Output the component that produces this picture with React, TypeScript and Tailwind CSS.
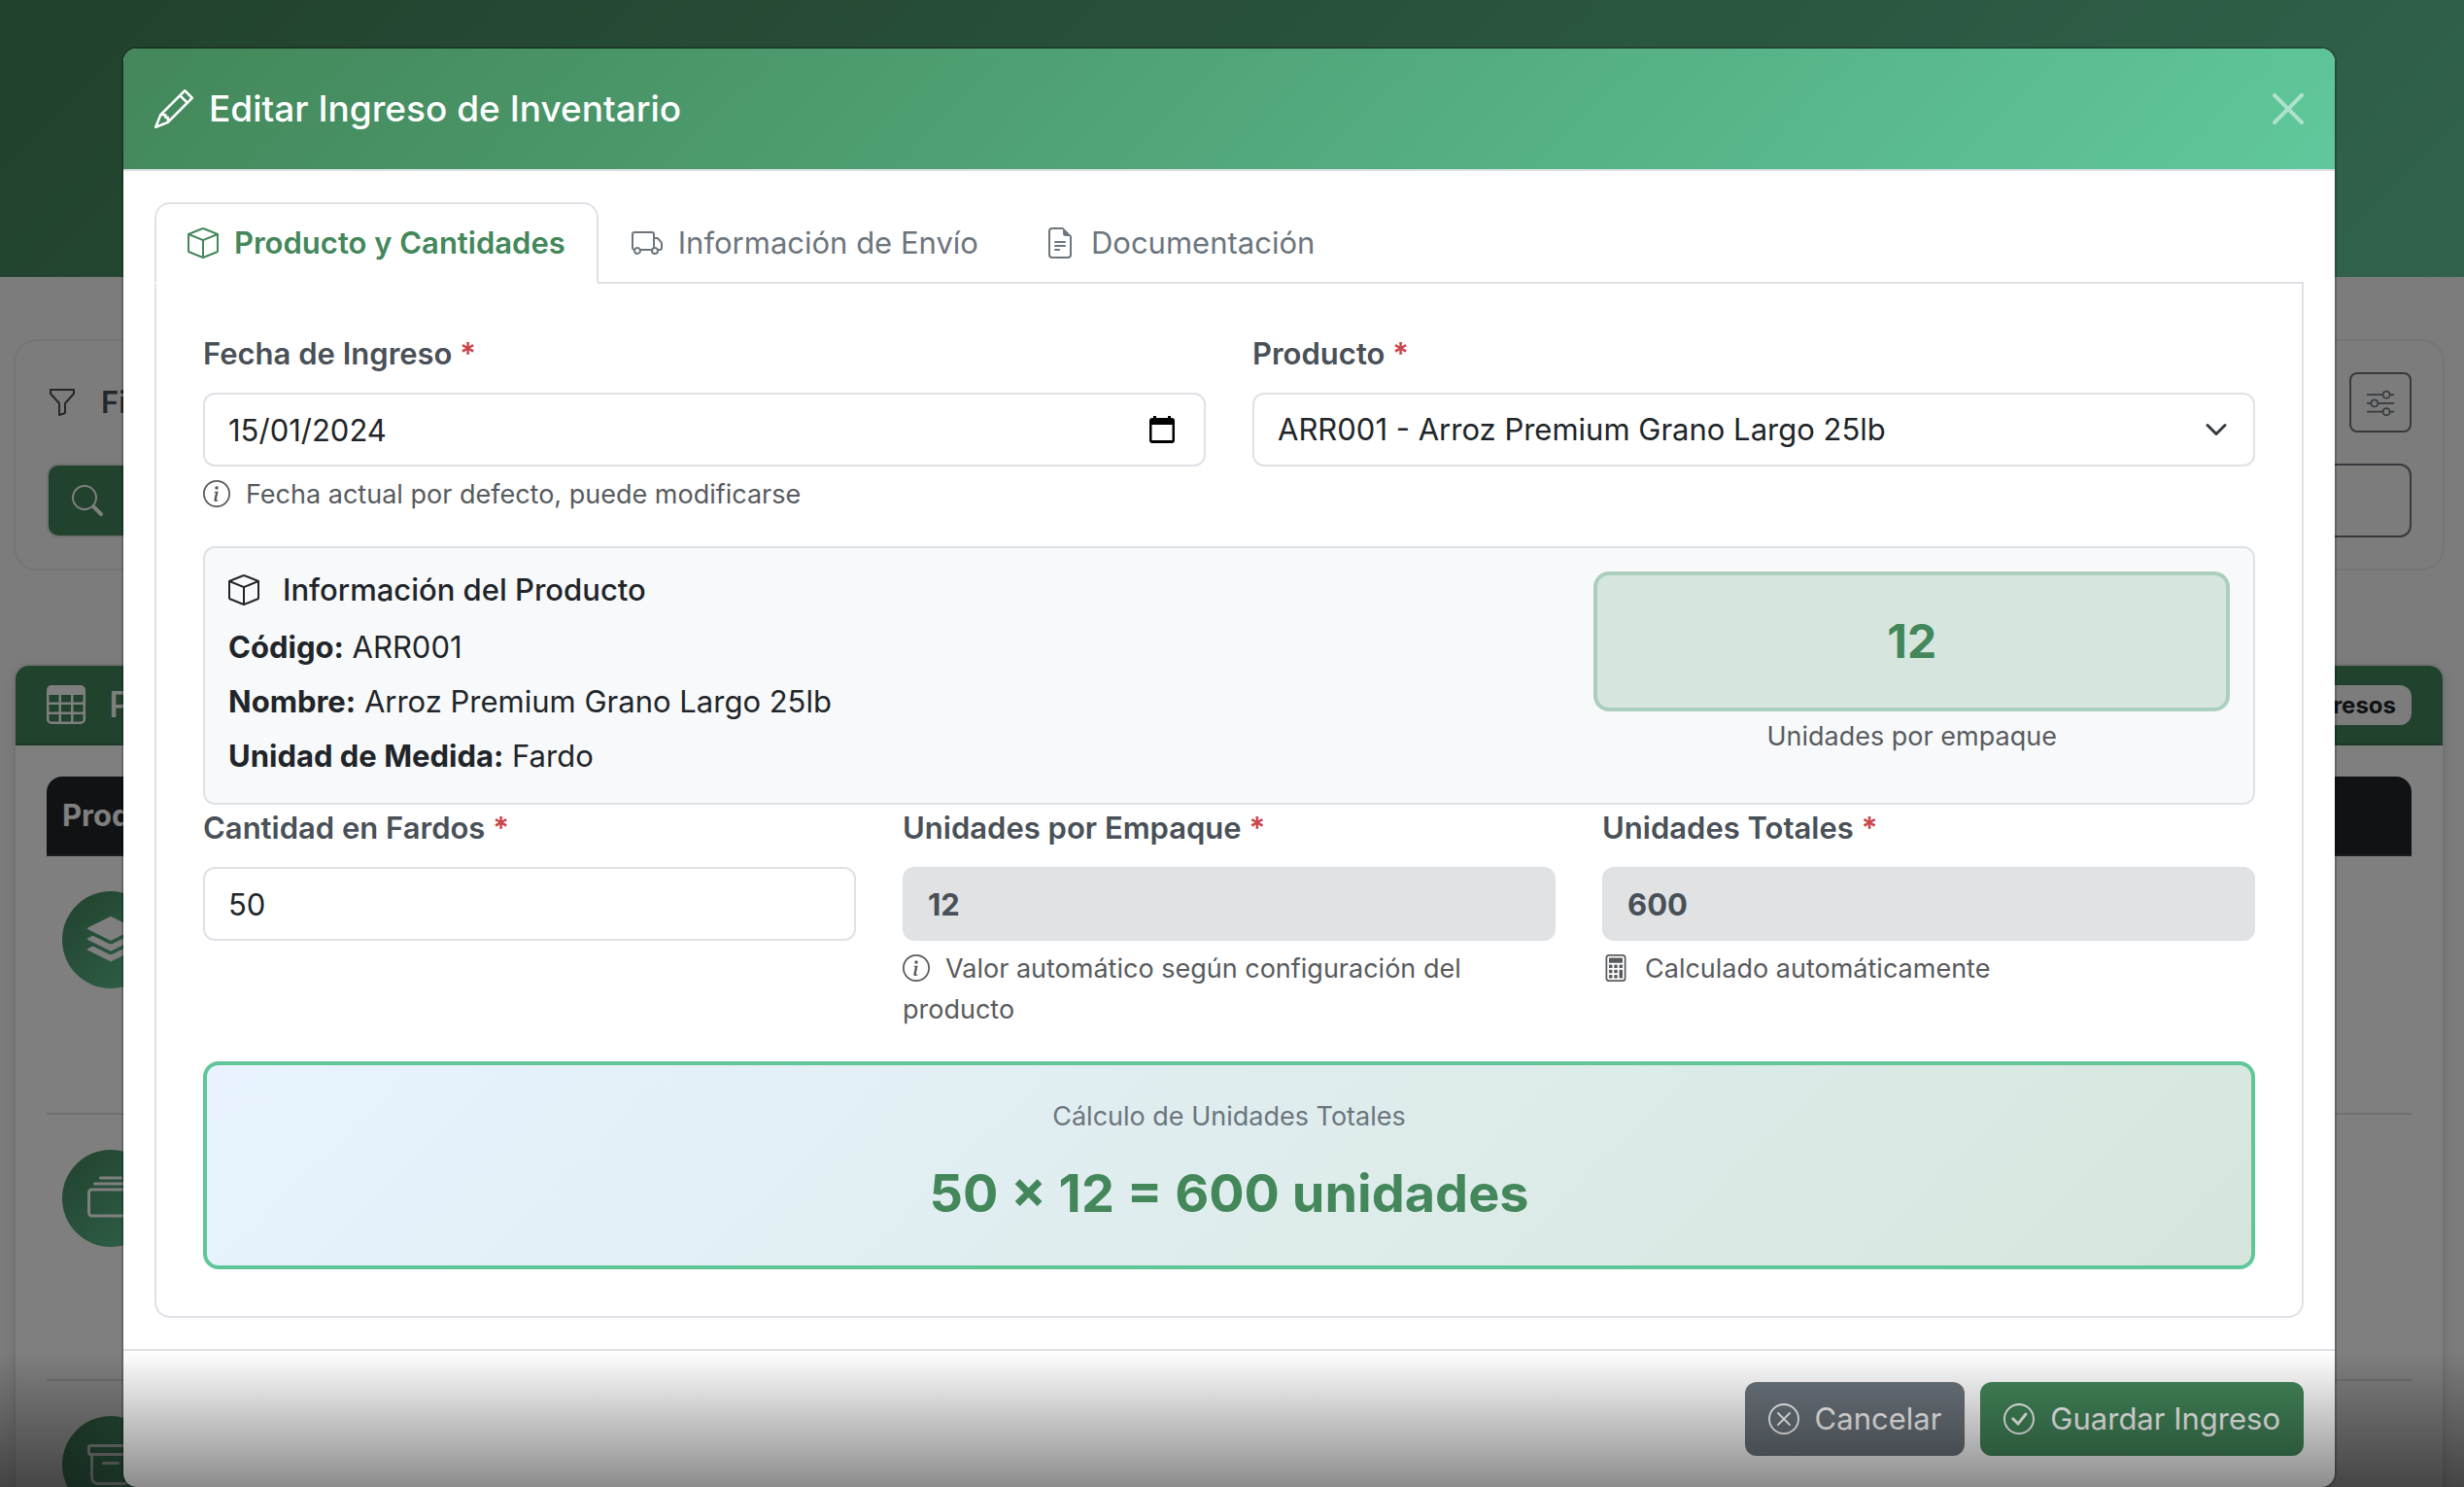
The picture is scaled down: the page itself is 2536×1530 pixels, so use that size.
import { useState } from "react";
import type { ReactNode } from "react";
import {
  BsArchive,
  BsBox,
  BsCalculator,
  BsCheckCircle,
  BsCollection,
  BsFileEarmarkText,
  BsFunnel,
  BsInfoCircle,
  BsPencil,
  BsSearch,
  BsSliders,
  BsStack,
  BsTable,
  BsTruck,
  BsXCircle,
} from "react-icons/bs";

const rows = [
  { id: "arroz", icon: <BsStack />, height: "h-[266px]" },
  { id: "frijol", icon: <BsCollection />, height: "h-[274px]" },
  { id: "azucar", icon: <BsArchive />, height: "h-[274px]" },
];

function InventoryPage() {
  return (
    <div className="h-full overflow-hidden bg-[#f8f8f8]">
      <header className="h-[285px] bg-linear-135 from-[#42845a] to-[#62c698]" />
      <main className="flex flex-col gap-24 pt-16 pr-5 pl-3.5">
        <section className="rounded-3xl border-2 border-[#ebebeb] p-8">
          <div className="flex items-center justify-between">
            <h2 className="flex items-center gap-6 text-[31px] font-semibold text-[#495057]">
              <BsFunnel className="size-8" />
              Filtros
            </h2>
            <button
              type="button"
              aria-label="Opciones de filtro"
              className="flex h-[62px] w-16 items-center justify-center rounded-lg border-2 border-[#6c757d] text-[#6c757d]"
            >
              <BsSliders className="size-7" />
            </button>
          </div>
          <div className="mt-8 flex h-[76px]">
            <button
              type="button"
              aria-label="Buscar"
              className="flex w-21 items-center justify-center rounded-l-xl border-2 border-[#dee2e6] bg-[#428458] text-white"
            >
              <BsSearch className="size-8" />
            </button>
            <input
              type="search"
              aria-label="Buscar ingreso"
              className="min-w-0 grow rounded-r-xl border-2 border-[#6c757d] bg-transparent px-6"
            />
          </div>
        </section>

        <section className="rounded-2xl border-2 border-[#e4e4e4] bg-white shadow-[0_4px_12px_rgba(0,0,0,0.1)]">
          <div className="flex h-[82px] items-center justify-between rounded-t-[14px] border-b-2 border-[#387350] bg-[#428458] px-8 text-white">
            <h2 className="flex items-center gap-6 text-[37px] font-medium">
              <BsTable className="size-10" />
              PEPS
            </h2>
            <span className="rounded-xl bg-[#f8f9fa] px-4 py-2 text-[24px] leading-[25px] font-bold text-[#212529]">
              3 Ingresos
            </span>
          </div>
          <div className="p-8">
            <table className="w-full border-separate border-spacing-0 text-left">
              <thead>
                <tr>
                  <th className="h-[82px] rounded-t-2xl border-b-2 border-[#373b3e] bg-[#212529] px-4 text-[31px] font-bold text-white">
                    Producto
                  </th>
                </tr>
              </thead>
              <tbody>
                {rows.map((row) => (
                  <tr key={row.id}>
                    <td className={`border-b-2 border-[#dee2e6] px-4 py-9 align-top ${row.height}`}>
                      <div className="flex size-[100px] items-center justify-center rounded-full bg-linear-135 from-[#42845a] to-[#62c698] text-5xl text-white">
                        {row.icon}
                      </div>
                    </td>
                  </tr>
                ))}
              </tbody>
            </table>
          </div>
        </section>
      </main>
    </div>
  );
}

function FieldLabel({ htmlFor, children }: { htmlFor: string; children: ReactNode }) {
  return (
    <label htmlFor={htmlFor} className="mb-4 block text-[31px] leading-[48px] font-semibold text-[#495057]">
      {children} <span className="text-[#cb444a]">*</span>
    </label>
  );
}

function Hint({ icon, children }: { icon: ReactNode; children: ReactNode }) {
  return (
    <p className="mt-2 text-[27px] leading-[42px] text-[#585b5e]">
      <span className="mr-4 inline-block align-[-4px] text-[28px]">{icon}</span>
      {children}
    </p>
  );
}

const control =
  "block h-[76px] w-full appearance-none rounded-xl border-2 border-[#dee2e6] px-6 text-[31px]";

function Tab({
  icon,
  active = false,
  children,
}: {
  icon: ReactNode;
  active?: boolean;
  children: ReactNode;
}) {
  return (
    <button
      type="button"
      role="tab"
      aria-selected={active}
      className={`-mb-0.5 flex h-[84px] items-center gap-4 rounded-t-2xl border-2 px-8 text-[31px] ${
        active
          ? "border-[#dee2e6] border-b-white bg-white font-semibold text-[#43875a]"
          : "border-transparent text-[#6c757d]"
      }`}
    >
      <span className="text-[32px]">{icon}</span>
      {children}
    </button>
  );
}

export default function App() {
  const [date, setDate] = useState("15/01/2024");
  const [quantity, setQuantity] = useState("50");
  const perPack = 12;
  const total = Number(quantity) * perPack;

  return (
    <div className="relative h-screen overflow-hidden font-[Inter,sans-serif] text-[#212529]">
      <InventoryPage />
      <div className="absolute inset-0 bg-black/50" />

      <div className="absolute inset-0 flex items-start justify-center overflow-hidden pt-12 pr-1.5">
        <form
          role="dialog"
          aria-labelledby="modal-title"
          className="mx-14 w-full max-w-[2280px] rounded-2xl border-2 border-black/20 bg-white bg-clip-padding"
          onSubmit={(e) => e.preventDefault()}
        >
          <div className="flex items-center justify-between rounded-t-[14px] border-b-2 border-[#dee2e6] bg-linear-135 from-[#43875a] to-[#60c89c] bg-clip-padding p-8">
            <h1
              id="modal-title"
              className="flex items-center gap-4 text-[37px] leading-[60px] font-medium text-white"
            >
              <BsPencil className="size-10" />
              Editar Ingreso de Inventario
            </h1>
            <button type="button" aria-label="Cerrar" className="text-white opacity-50">
              <svg viewBox="0 0 16 16" fill="currentColor" className="size-8">
                <path d="M.293.293a1 1 0 0 1 1.414 0L8 6.586 14.293.293a1 1 0 1 1 1.414 1.414L9.414 8l6.293 6.293a1 1 0 0 1-1.414 1.414L8 9.414l-6.293 6.293a1 1 0 0 1-1.414-1.414L6.586 8 .293 1.707a1 1 0 0 1 0-1.414" />
              </svg>
            </button>
          </div>

          <div className="p-8">
            <div role="tablist" className="flex border-b-2 border-[#dee2e6]">
              <Tab icon={<BsBox />} active>
                Producto y Cantidades
              </Tab>
              <Tab icon={<BsTruck />}>Información de Envío</Tab>
              <Tab icon={<BsFileEarmarkText />}>Documentación</Tab>
            </div>

            <div
              role="tabpanel"
              className="rounded-b-2xl border-2 border-t-0 border-[#dee2e6] p-12"
            >
              <div className="grid grid-cols-2 gap-12">
                <div>
                  <FieldLabel htmlFor="fecha">Fecha de Ingreso</FieldLabel>
                  <div className="relative">
                    <input
                      id="fecha"
                      type="text"
                      value={date}
                      onChange={(e) => setDate(e.target.value)}
                      className={control}
                    />
                    <button
                      type="button"
                      aria-label="Abrir calendario"
                      className="absolute inset-y-0 right-8 text-black"
                    >
                      <svg viewBox="0 0 26 28" fill="currentColor" className="h-7 w-[26px]">
                        <path
                          fillRule="evenodd"
                          d="M4 0h3v2h12V0h3v2h1a3 3 0 0 1 3 3v20a3 3 0 0 1-3 3H3a3 3 0 0 1-3-3V5a3 3 0 0 1 3-3h1zM2.500 9v16h21V9z"
                        />
                      </svg>
                    </button>
                  </div>
                  <Hint icon={<BsInfoCircle />}>Fecha actual por defecto, puede modificarse</Hint>
                </div>
                <div>
                  <FieldLabel htmlFor="producto">Producto</FieldLabel>
                  <div className="relative">
                    <select id="producto" className={`${control} bg-white`}>
                      <option>ARR001 - Arroz Premium Grano Largo 25lb</option>
                    </select>
                    <svg
                      viewBox="0 0 16 16"
                      fill="none"
                      stroke="#343a40"
                      strokeWidth="2"
                      strokeLinecap="round"
                      strokeLinejoin="round"
                      className="pointer-events-none absolute inset-y-0 right-7 my-auto size-6"
                    >
                      <path d="m2 5 6 6 6-6" />
                    </svg>
                  </div>
                </div>
              </div>

              <section className="mt-8 grid grid-cols-3 gap-12 rounded-xl border-2 border-[#dee2e6] bg-[#f8f9fb] p-6">
                <div className="col-span-2 flex flex-col gap-2 text-[31px] leading-[48px]">
                  <h2 className="mb-2 flex items-center gap-6 leading-[38px] font-medium">
                    <BsBox className="size-8" />
                    Información del Producto
                  </h2>
                  <p>
                    <strong className="font-bold">Código:</strong> ARR001
                  </p>
                  <p>
                    <strong className="font-bold">Nombre:</strong> Arroz Premium Grano Largo 25lb
                  </p>
                  <p>
                    <strong className="font-bold">Unidad de Medida:</strong> Fardo
                  </p>
                </div>
                <div className="text-center">
                  <div className="rounded-2xl border-4 border-[#abcfbc] bg-[#d6e6de] p-8 text-5xl leading-[72px] font-bold text-[#43875a]">
                    {perPack}
                  </div>
                  <p className="text-[27px] leading-[52px] text-[#585b5e]">Unidades por empaque</p>
                </div>
              </section>

              <div className="grid grid-cols-3 gap-12">
                <div>
                  <FieldLabel htmlFor="cantidad">Cantidad en Fardos</FieldLabel>
                  <input
                    id="cantidad"
                    inputMode="numeric"
                    value={quantity}
                    onChange={(e) => setQuantity(e.target.value)}
                    className={control}
                  />
                </div>
                <div>
                  <FieldLabel htmlFor="empaque">Unidades por Empaque</FieldLabel>
                  <input
                    id="empaque"
                    readOnly
                    value={perPack}
                    className={`${control} bg-[#e1e2e4] font-bold text-[#495057]`}
                  />
                  <Hint icon={<BsInfoCircle />}>
                    Valor automático según configuración del producto
                  </Hint>
                </div>
                <div>
                  <FieldLabel htmlFor="totales">Unidades Totales</FieldLabel>
                  <input
                    id="totales"
                    readOnly
                    value={total}
                    className={`${control} bg-[#e1e2e4] font-bold text-[#495057]`}
                  />
                  <Hint icon={<BsCalculator />}>Calculado automáticamente</Hint>
                </div>
              </div>

              <section className="mt-8 rounded-2xl border-4 border-[#60c698] bg-linear-135 from-[#e8f3ff] to-[#d6e6dc] p-8 text-center">
                <p className="text-[27px] leading-[42px] text-[#6c757d]">
                  Cálculo de Unidades Totales
                </p>
                <p className="mt-4 text-[54px] leading-[84px] font-bold text-[#43875a]">
                  {quantity} × {perPack} = {total} unidades
                </p>
              </section>
            </div>
          </div>

          <div className="flex justify-end gap-4 border-t-2 border-[#dee2e6] p-8 text-[31px] text-white">
            <button
              type="button"
              className="flex h-[76px] items-center gap-4 rounded-xl bg-[#6c757d] px-6"
            >
              <BsXCircle className="size-8" />
              Cancelar
            </button>
            <button
              type="submit"
              className="flex h-[76px] items-center gap-4 rounded-xl bg-[#43875a] px-6"
            >
              <BsCheckCircle className="size-8" />
              Guardar Ingreso
            </button>
          </div>
        </form>
      </div>

      <div className="pointer-events-none absolute inset-x-0 bottom-0 h-[140px] bg-linear-to-b from-black/0 to-black/45" />
    </div>
  );
}
